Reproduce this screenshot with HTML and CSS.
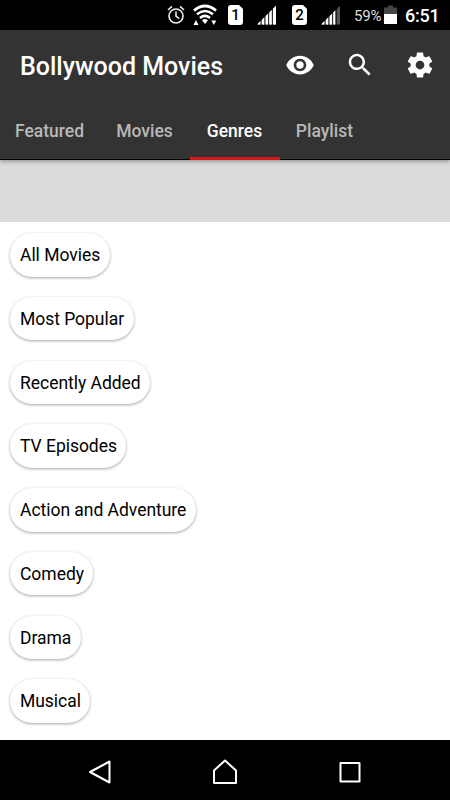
FILE: index.html
```html
<!DOCTYPE html>
<html lang="en">
<head>
<meta charset="utf-8">
<title>Bollywood Movies</title>
<link rel="stylesheet" href="styles.css">
</head>
<body>
<div class="screen">
  <div class="status">
    <svg class="alarm" width="18" height="20" viewBox="0 0 18 20" fill="none" stroke="#eee" stroke-width="1.6"><circle cx="9" cy="11" r="7"/><path d="M9 6.500V11l3.200 2.600M1 5l4-3.600M17 5l-4-3.600"/></svg>
    <svg class="wifi" width="24" height="22" viewBox="0 0 24 22"><path d="M1 6.600Q12-2.600 23 6.600" fill="none" stroke="#fff" stroke-width="2.900"/><path d="M4 10.300Q12 3.700 20 10.300M7 14Q12 9.800 17 14" fill="none" stroke="#fff" stroke-width="2.500"/><path d="M9 16.200Q12 13.800 15 16.200L12 20ZM.5 21l2.500-5 2.500 5ZM18.300 16.500h5l-2.500 4.500Z" fill="#fff"/></svg>
    <span class="sim sim-one">1</span>
    <svg class="signal" width="20" height="20" viewBox="0 0 20 20"><path fill="#aaa" d="M0 19.500 19 .8v18.700Z"/><path fill="#fff" d="M1 19.500v-1l2.500-2.500v3.500ZM4.800 19.500v-4.700L7.300 12.300v7.200ZM8.500 19.500V11.200L11 8.700v10.800ZM12.200 19.500V7.500l2.600-2.600v14.600ZM16 19.500V3.800L19 .8v18.700Z"/><path stroke="#000" stroke-width=".8" d="M4.100 13v7M7.900 9v11M11.600 5v15M15.400 2v18"/></svg>
    <span class="sim sim-two">2</span>
    <svg class="signal signal-two" width="20" height="20" viewBox="0 0 20 20"><path fill="#aaa" d="M0 19.500 14.500 5.200v14.300Z"/><path fill="#fff" d="M1 19.500v-1l2.500-2.500v3.500ZM4.800 19.500v-4.700L7.300 12.300v7.200ZM8.500 19.500V11.200L11 8.700v10.800ZM12.200 19.500V7.500l2.300-2.300v14.300Z"/><path fill="#555" d="M15.400 19.500V4.400L19 .8v18.700Z"/><path stroke="#000" stroke-width=".8" d="M4.100 13v7M7.900 9v11M11.600 5v15M15 2v18"/></svg>
    <span class="percent">59%</span>
    <svg class="battery" width="13" height="20" viewBox="0 0 13 20"><path fill="#444" d="M4 .5h5v2h4v7.500H0V2.500h4Z"/><path fill="#fff" d="M0 9h13v10H0Z"/></svg>
    <span class="time">6:51</span>
  </div>
  <header class="header">
    <div class="toolbar">
      <h1 class="title">Bollywood Movies</h1>
      <svg class="action" viewBox="0 0 24 24"><path d="M12 4.500C7 4.500 2.730 7.610 1 12c1.730 4.390 6 7.500 11 7.500s9.270-3.110 11-7.500c-1.730-4.390-6-7.500-11-7.500zM12 17c-2.760 0-5-2.240-5-5s2.240-5 5-5 5 2.240 5 5-2.240 5-5 5zm0-8c-1.660 0-3 1.340-3 3s1.340 3 3 3 3-1.340 3-3-1.340-3-3-3z"/></svg>
      <svg class="action" viewBox="0 0 24 24"><path d="M15.500 14h-.79l-.28-.27C15.410 12.590 16 11.110 16 9.500 16 5.910 13.090 3 9.500 3S3 5.910 3 9.500 5.910 16 9.500 16c1.610 0 3.090-.59 4.230-1.570l.27.28v.79l5 4.990L20.490 19l-4.990-5zm-6 0C7.010 14 5 11.990 5 9.500S7.010 5 9.500 5 14 7.010 14 9.500 11.990 14 9.500 14z"/></svg>
      <svg class="action" viewBox="0 0 24 24"><path d="M19.430 12.980c.04-.32.07-.64.07-.98s-.03-.66-.07-.98l2.110-1.650c.19-.15.24-.42.12-.64l-2-3.460c-.12-.22-.39-.3-.61-.22l-2.490 1c-.52-.4-1.080-.73-1.690-.98l-.38-2.650C14.460 2.180 14.250 2 14 2h-4c-.25 0-.46.18-.49.42l-.38 2.650c-.61.25-1.170.59-1.690.98l-2.490-1c-.23-.09-.49 0-.61.22l-2 3.460c-.13.22-.07.49.12.64l2.110 1.650c-.04.32-.07.65-.07.98s.03.66.07.98l-2.110 1.650c-.19.15-.24.42-.12.64l2 3.460c.12.22.39.3.61.22l2.490-1c.52.4 1.080.73 1.690.98l.38 2.650c.03.24.24.42.49.42h4c.25 0 .46-.18.49-.42l.38-2.650c.61-.25 1.170-.59 1.690-.98l2.490 1c.23.09.49 0 .61-.22l2-3.460c.12-.22.07-.49-.12-.64l-2.110-1.650zM12 15.500c-1.930 0-3.500-1.570-3.500-3.500s1.570-3.500 3.500-3.500 3.500 1.570 3.500 3.500-1.570 3.500-3.500 3.500z"/></svg>
    </div>
    <nav class="tabs">
      <span class="tab featured">Featured</span>
      <span class="tab">Movies</span>
      <span class="tab active">Genres</span>
      <span class="tab">Playlist</span>
    </nav>
  </header>
  <div class="banner"></div>
  <main class="list">
    <span class="chip">All Movies</span>
    <span class="chip">Most Popular</span>
    <span class="chip">Recently Added</span>
    <span class="chip">TV Episodes</span>
    <span class="chip">Action and Adventure</span>
    <span class="chip">Comedy</span>
    <span class="chip">Drama</span>
    <span class="chip">Musical</span>
  </main>
  <footer class="navbar">
    <svg width="26" height="28" viewBox="0 0 26 28"><path d="M22.500 3.500v21L3 14Z"/></svg>
    <svg width="26" height="28" viewBox="0 0 26 28"><path d="M2 12.500 13 2.500 24 12.500V25H2Z"/></svg>
    <svg width="26" height="28" viewBox="0 0 26 28"><path d="M3.500 5h19v18.500h-19Z"/></svg>
  </footer>
</div>
</body>
</html>
```

FILE: styles.css
```css
* { box-sizing: border-box; }
body { margin: 0; font-family: Roboto, "Liberation Sans", sans-serif; }
.screen { width: 450px; height: 800px; display: flex; flex-direction: column; background: #fff; overflow: hidden; }
.status { height: 30px; flex: none; display: flex; align-items: center; background: #000; color: #fff; padding-left: 167px; white-space: nowrap; }
.status svg { flex: none; }
.wifi { margin-left: 8px; }
.sim { flex: none; width: 15px; height: 20px; border-radius: 3px; background: #fff; color: #000; font-size: 15px; font-weight: 500; line-height: 21px; text-align: center; clip-path: polygon(0 0, 11px 0, 100% 4px, 100% 100%, 0 100%); }
.sim-one { margin-left: 11px; }
.sim-two { margin-left: 15px; }
.signal { margin-left: 14px; }
.percent { width: 30px; margin-left: 13px; font-size: 15px; letter-spacing: -.2px; color: #ddd; line-height: 30px; padding-top: 1px; }
.battery { margin-left: 0; }
.time { margin-left: 8px; font-size: 18px; letter-spacing: -.2px; font-weight: 500; line-height: 30px; padding-top: 1px; }
.header { flex: none; height: 130px; background: #333; box-shadow: 0 1px 5px rgba(0, 0, 0, .4); position: relative; }
.toolbar { height: 70px; display: flex; align-items: center; gap: 30px; padding: 0 15px 0 20px; }
.title { margin: 0 auto 0 0; padding-top: 2px; font-size: 25px; font-weight: 500; color: #fff; white-space: nowrap; }
.action { width: 30px; height: 30px; fill: #fff; flex: none; }
.tabs { display: flex; height: 60px; border-bottom: 1px solid #000; }
.tab { width: 90px; height: 60px; text-align: center; line-height: 62px; font-size: 17.500px; font-weight: 500; color: #b8b8b8; padding-right: 1px; }
.featured { width: 100px; }
.active { color: #fff; border-bottom: 3px solid #d6161a; }
.banner { flex: none; height: 62px; background: #dcdcdc; }
.list { flex: 1; display: flex; flex-direction: column; align-items: flex-start; gap: 20.250px; padding: 11px 10px 0; }
.chip { height: 43.500px; padding: 0 9.500px 0 10px; border-radius: 22px; background: #fff; box-shadow: 0 1px 3px rgba(0, 0, 0, .36); color: #000; font-size: 17.500px; letter-spacing: -.03px; line-height: 44px; white-space: nowrap; }
.navbar { flex: none; height: 60px; background: #000; display: flex; align-items: center; justify-content: center; gap: 99px; padding-top: 3px; }
.navbar svg { fill: none; stroke: #fff; stroke-width: 2; stroke-linejoin: round; }
```
